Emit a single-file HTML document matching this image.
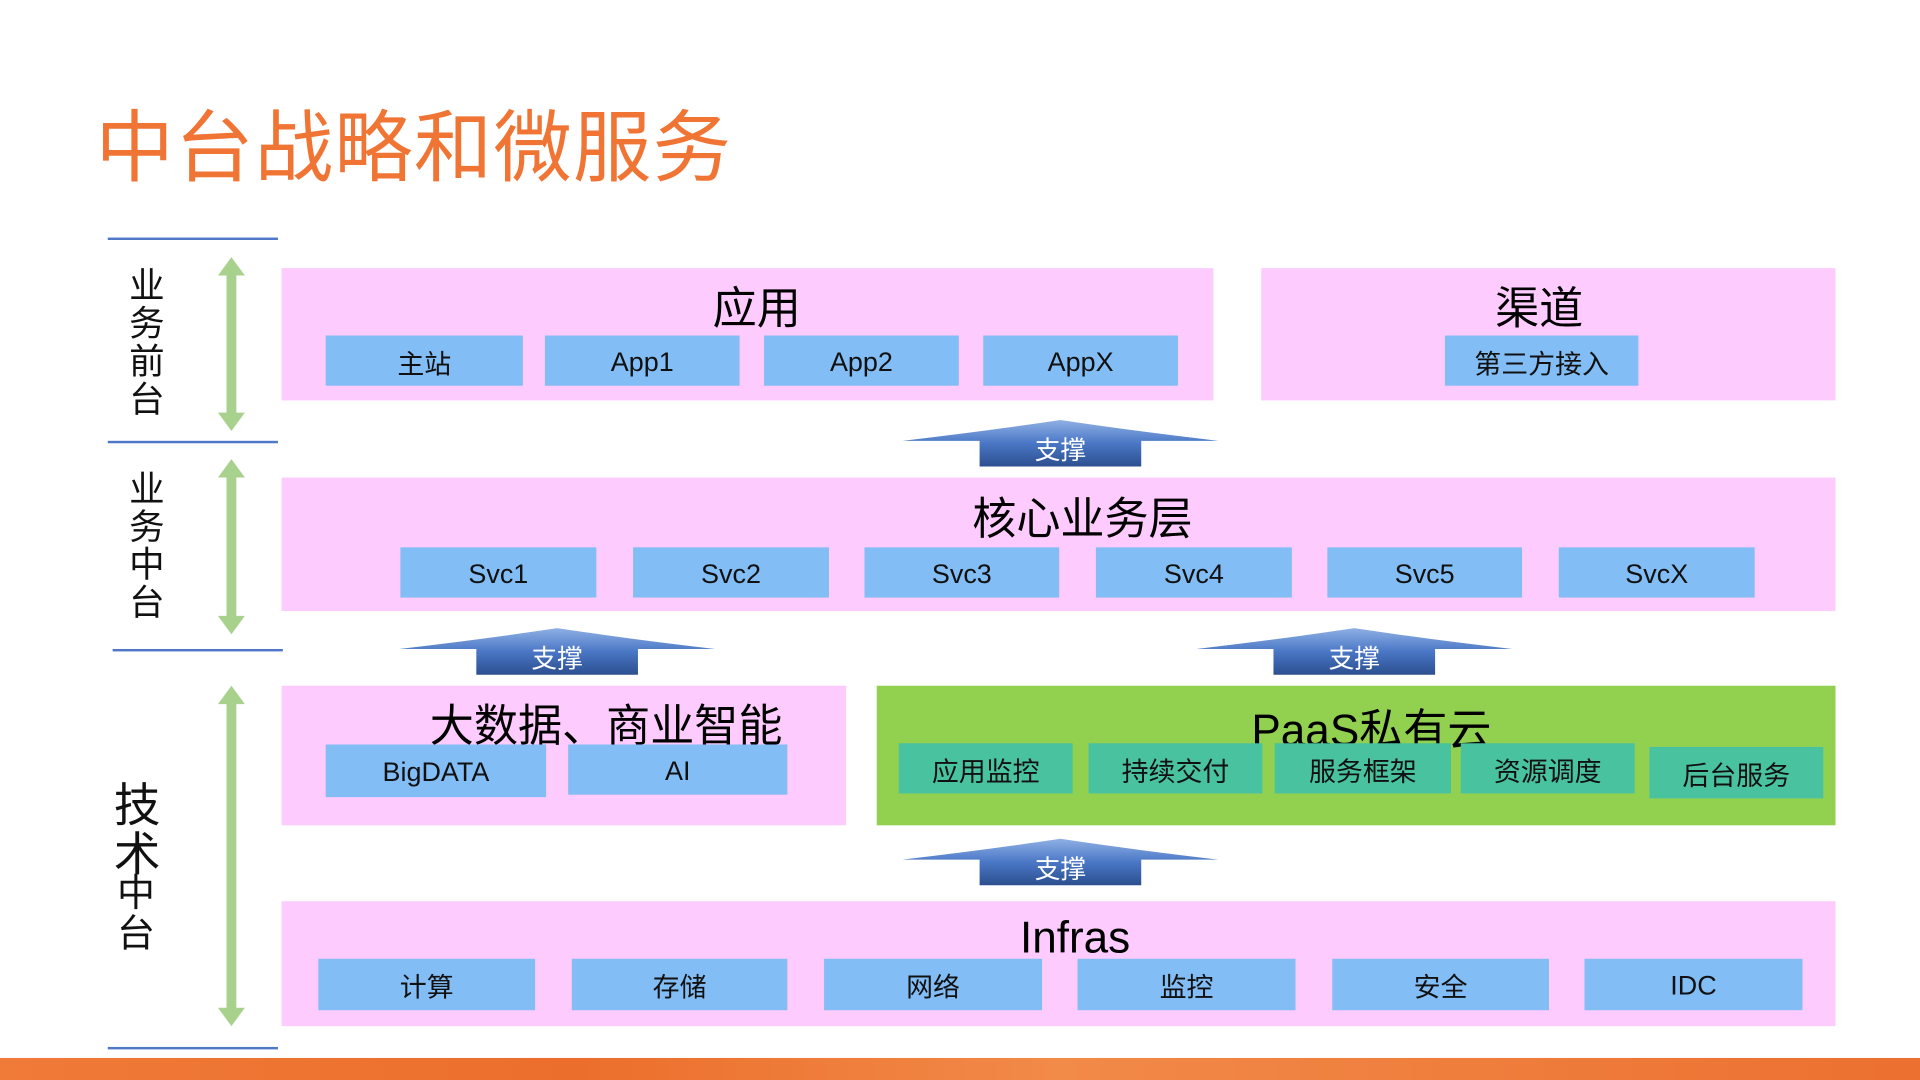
<!DOCTYPE html>
<html><head><meta charset="utf-8"><style>
html,body{margin:0;padding:0;background:#fff;overflow:hidden;width:1920px;height:1080px}
#w{position:absolute;left:0;top:0;width:1568px;height:882px;transform:scale(1.22449);transform-origin:0 0;font-family:"Liberation Sans","Noto Sans CJK SC",sans-serif}
.a{position:absolute}
.pk{position:absolute;background:#fdcbfd}
.bx{position:absolute;background:#82bdf5;color:#111;font-size:22px;display:flex;align-items:center;justify-content:center;padding-top:2px;box-sizing:border-box}
.tl{position:absolute;background:#49c2a0;color:#111;font-size:22px;display:flex;align-items:center;justify-content:center;padding-top:2px;box-sizing:border-box}
.hd{position:absolute;font-size:36px;color:#000;transform:translateX(-50%);white-space:nowrap;line-height:1}
.ln{position:absolute;height:2px;background:#4f78c8}
.vt{position:absolute;font-size:29px;line-height:31px;width:32px;text-align:center;color:#111}
</style></head><body><div id="w">
<div class="a" style="left:78px;top:89px;font-size:64px;color:#f07535;line-height:1;letter-spacing:1px">中台战略和微服务</div>

<div class="ln" style="left:88px;top:194px;width:139px"></div>
<div class="ln" style="left:88px;top:360px;width:139px"></div>
<div class="ln" style="left:92px;top:530px;width:139px"></div>
<div class="ln" style="left:88px;top:855px;width:139px"></div>

<div class="vt" style="left:104px;top:219px">业<br>务<br>前<br>台</div>
<div class="vt" style="left:104px;top:385px">业<br>务<br>中<br>台</div>
<div class="vt" style="left:92px;top:639px;font-size:38px;line-height:40px;width:40px">技<br>术</div>
<div class="vt" style="left:95px;top:713px;font-size:31px;line-height:33px">中<br>台</div>

<svg class="a" style="left:0;top:0" width="240" height="882">
<g fill="#a9d18e">
<polygon points="189,210 200,225 193,225 193,337 200,337 189,352 178,337 185,337 185,225 178,225"/>
<polygon points="189,375 200,390 193,390 193,503 200,503 189,518 178,503 185,503 185,390 178,390"/>
<polygon points="189,560 200,575 193,575 193,823 200,823 189,838 178,823 185,823 185,575 178,575"/>
</g></svg>

<div class="pk" style="left:230px;top:219px;width:761px;height:108px"></div>
<div class="pk" style="left:1030px;top:219px;width:469px;height:108px"></div>
<div class="hd" style="left:618px;top:234px">应用</div>
<div class="hd" style="left:1257px;top:234px">渠道</div>
<div class="bx" style="left:266px;top:274px;width:161px;height:41px">主站</div>
<div class="bx" style="left:445px;top:274px;width:159px;height:41px">App1</div>
<div class="bx" style="left:624px;top:274px;width:159px;height:41px">App2</div>
<div class="bx" style="left:803px;top:274px;width:159px;height:41px">AppX</div>
<div class="bx" style="left:1180px;top:274px;width:158px;height:41px">第三方接入</div>

<div class="pk" style="left:230px;top:390px;width:1269px;height:109px"></div>
<div class="hd" style="left:884px;top:406px">核心业务层</div>
<div class="bx" style="left:327px;top:447px;width:160px;height:41px">Svc1</div>
<div class="bx" style="left:517px;top:447px;width:160px;height:41px">Svc2</div>
<div class="bx" style="left:706px;top:447px;width:159px;height:41px">Svc3</div>
<div class="bx" style="left:895px;top:447px;width:160px;height:41px">Svc4</div>
<div class="bx" style="left:1084px;top:447px;width:159px;height:41px">Svc5</div>
<div class="bx" style="left:1273px;top:447px;width:160px;height:41px">SvcX</div>

<div class="pk" style="left:230px;top:560px;width:461px;height:114px"></div>
<div class="hd" style="left:495px;top:575px">大数据、商业智能</div>
<div class="bx" style="left:266px;top:608px;width:180px;height:43px">BigDATA</div>
<div class="bx" style="left:464px;top:608px;width:179px;height:41px">AI</div>

<div class="a" style="left:716px;top:560px;width:783px;height:114px;background:#92d050"></div>
<div class="hd" style="left:1120px;top:579px">PaaS私有云</div>
<div class="tl" style="left:734px;top:607px;width:142px;height:41px">应用监控</div>
<div class="tl" style="left:889px;top:607px;width:142px;height:41px">持续交付</div>
<div class="tl" style="left:1041px;top:607px;width:144px;height:41px">服务框架</div>
<div class="tl" style="left:1193px;top:607px;width:142px;height:41px">资源调度</div>
<div class="tl" style="left:1347px;top:610px;width:142px;height:42px">后台服务</div>

<div class="pk" style="left:230px;top:736px;width:1269px;height:102px"></div>
<div class="hd" style="left:878px;top:748px">Infras</div>
<div class="bx" style="left:260px;top:783px;width:177px;height:42px">计算</div>
<div class="bx" style="left:467px;top:783px;width:176px;height:42px">存储</div>
<div class="bx" style="left:673px;top:783px;width:178px;height:42px">网络</div>
<div class="bx" style="left:880px;top:783px;width:178px;height:42px">监控</div>
<div class="bx" style="left:1088px;top:783px;width:177px;height:42px">安全</div>
<div class="bx" style="left:1294px;top:783px;width:178px;height:42px">IDC</div>

<svg class="a" style="left:0;top:0" width="1568" height="882">
<defs><linearGradient id="g" x1="0" y1="0" x2="0" y2="1"><stop offset="0" stop-color="#8fb0e4"/><stop offset="0.5" stop-color="#4a77c6"/><stop offset="1" stop-color="#2c4f8f"/></linearGradient></defs>
<g fill="url(#g)">
<path id="ar" d="M0,0 Q60,9 129,17 L66,17 L66,38 L-66,38 L-66,17 L-129,17 Q-60,9 0,0Z" transform="translate(866,343)"/>
<use href="#ar" transform="translate(-411,170)"/>
<use href="#ar" transform="translate(240,170)"/>
<use href="#ar" transform="translate(0,342)"/>
</g>
<g fill="#fff" font-size="21" text-anchor="middle" font-family="Liberation Sans,Noto Sans CJK SC,sans-serif">
<text x="866" y="375">支撑</text>
<text x="455" y="545">支撑</text>
<text x="1106" y="545">支撑</text>
<text x="866" y="717">支撑</text>
</g></svg>

<div class="a" style="left:0;top:864px;width:1568px;height:18px;background:linear-gradient(90deg,#f07a38,#ec6e2c 30%,#f28a48 55%,#ec7030)"></div>
</div></body></html>
